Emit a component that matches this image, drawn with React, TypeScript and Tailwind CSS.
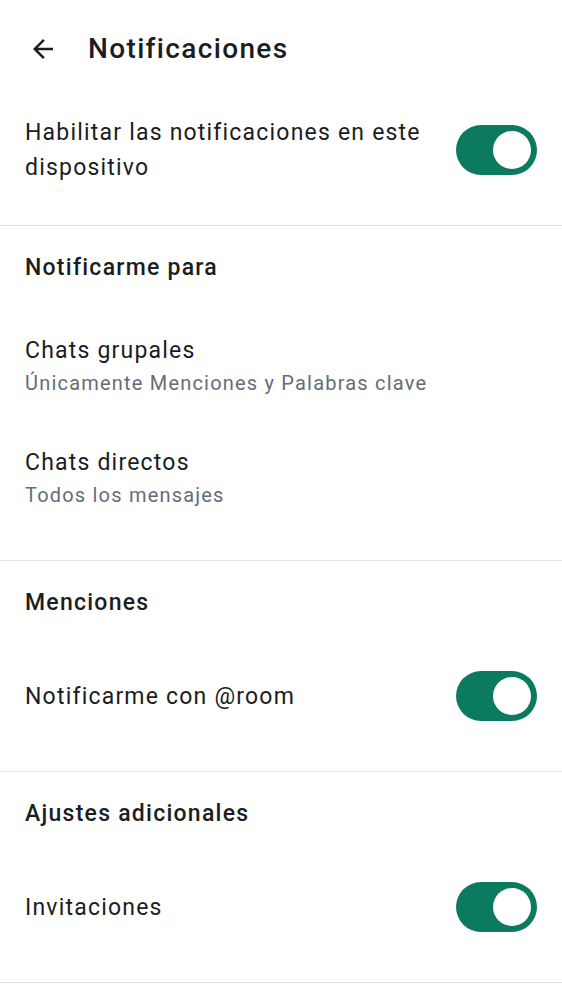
import { ReactNode } from "react"

const Toggle = () => (
  <div className="flex h-[50px] w-[81px] shrink-0 items-center justify-end rounded-full bg-[#0b7a5e] pr-[6px]">
    <div className="h-[38px] w-[38px] rounded-full bg-white" />
  </div>
)

const SectionHeader = ({ children }: { children: ReactNode }) => (
  <div className="pt-[27px] text-[23px] font-medium leading-[30px] tracking-[1.25px] text-[#1b1d22]">
    {children}
  </div>
)

const Divider = () => <div className="h-px bg-[#e3e4e6]" />

const SubItem = ({ title, sub }: { title: string; sub: string }) => (
  <div>
    <div className="text-[23px] leading-[30px] tracking-[1.2px] text-[#1b1d22]">{title}</div>
    <div className="mt-[3px] text-[20px] leading-[28px] tracking-[1.2px] text-[#656d77]">{sub}</div>
  </div>
)

const ToggleRow = ({ children }: { children: ReactNode }) => (
  <div className="flex h-[50px] items-center justify-between">
    <div className="text-[23px] leading-[35px] tracking-[1.2px] text-[#1b1d22]">{children}</div>
    <Toggle />
  </div>
)

export default function App() {
  return (
    <div
      className="min-h-screen w-[562px] bg-white"
      style={{ fontFamily: "Roboto, 'Noto Sans', sans-serif" }}
    >
      {/* Header */}
      <div className="flex h-[98px] items-center pl-[28px]">
        <svg width="30" height="30" viewBox="0 0 24 24" className="text-[#1b1d22]">
          <path
            d="M20 11H7.83l5.59-5.59L12 4l-8 8 8 8 1.41-1.41L7.83 13H20v-2z"
            fill="currentColor"
          />
        </svg>
        <div className="ml-[30px] text-[28px] font-medium leading-none tracking-[1.35px] text-[#1b1d22]">
          Notificaciones
        </div>
      </div>

      <div className="px-[25px]">
        <div className="flex items-center justify-between pt-[27px] pb-[50px]">
          <div className="flex h-[50px] w-[415px] items-center text-[23px] leading-[35px] tracking-[1.2px] text-[#1b1d22]">
            <span>Habilitar las notificaciones en este dispositivo</span>
          </div>
          <Toggle />
        </div>
      </div>
      <Divider />

      <div className="px-[25px] pb-[51px]">
        <SectionHeader>Notificarme para</SectionHeader>
        <div className="mt-[53px] flex flex-col gap-[51px]">
          <SubItem title="Chats grupales" sub="Únicamente Menciones y Palabras clave" />
          <SubItem title="Chats directos" sub="Todos los mensajes" />
        </div>
      </div>
      <Divider />

      <div className="px-[25px] pb-[50px]">
        <SectionHeader>Menciones</SectionHeader>
        <div className="mt-[53px]">
          <ToggleRow>Notificarme con @room</ToggleRow>
        </div>
      </div>
      <Divider />

      <div className="px-[25px] pb-[50px]">
        <SectionHeader>Ajustes adicionales</SectionHeader>
        <div className="mt-[53px]">
          <ToggleRow>Invitaciones</ToggleRow>
        </div>
      </div>
      <Divider />
    </div>
  )
}
